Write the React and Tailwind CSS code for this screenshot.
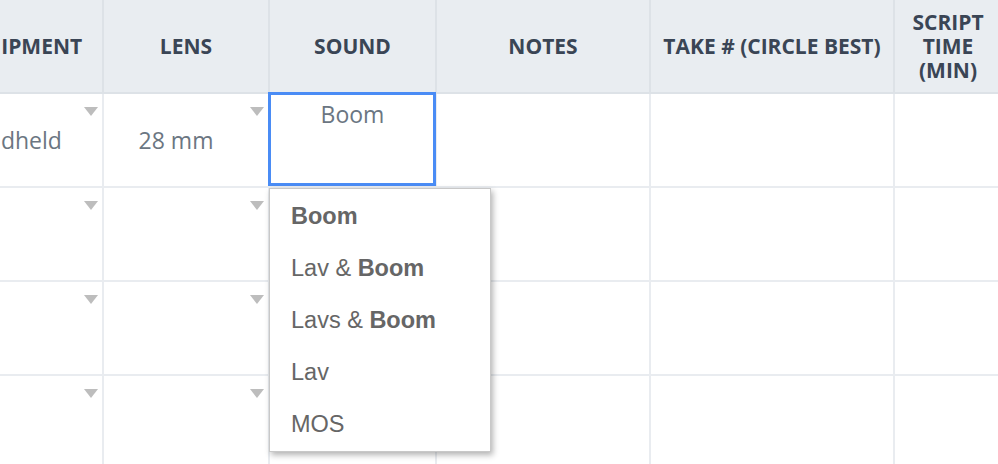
import React from 'react';

const columns = [
  { key: 'equipment', label: 'EQUIPMENT', width: 'w-[167px]', arrow: true },
  { key: 'lens', label: 'LENS', width: 'w-[166px]', arrow: true },
  { key: 'sound', label: 'SOUND', width: 'w-[167px]' },
  { key: 'notes', label: 'NOTES', width: 'w-[214px]' },
  { key: 'take', label: 'TAKE # (CIRCLE BEST)', width: 'w-[244px]' },
  { key: 'time', label: 'SCRIPT TIME (MIN)', width: 'w-[108px]' },
];

const rows = [
  { equipment: 'Handheld', lens: '28 mm', sound: 'Boom' },
  {},
  {},
  {},
];

const soundOptions = [
  [{ text: 'Boom', bold: true }],
  [{ text: 'Lav & ' }, { text: 'Boom', bold: true }],
  [{ text: 'Lavs & ' }, { text: 'Boom', bold: true }],
  [{ text: 'Lav' }],
  [{ text: 'MOS' }],
];

const Arrow = () => (
  <svg className="absolute top-[13px] right-[4px]" width="14" height="9" viewBox="0 0 14 9">
    <path d="M0 0h14L7 9z" fill="#bdbdbd" />
  </svg>
);

const SoundDropdown = () => (
  <div className="absolute left-[-1px] top-[94px] z-10 w-[222px] bg-white border border-[#c8c8c8] py-[1px] shadow-[2px_3px_6px_rgba(0,0,0,0.3)] font-['Liberation_Sans',Arial,sans-serif] text-[23.5px] text-[#666666]">
    {soundOptions.map((parts, i) => (
      <div key={i} className="h-[52px] leading-[52px] pl-[21px] whitespace-pre">
        {parts.map((p, j) => (
          <span key={j} className={p.bold ? 'font-bold' : ''}>{p.text}</span>
        ))}
      </div>
    ))}
  </div>
);

const App = () => {
  return (
    <div className="w-[998px] h-[464px] overflow-hidden bg-white font-['Open_Sans',sans-serif]">
      <div className="ml-[-63px] w-max">
        <div className="flex h-[94px] bg-[#e9edf1] border-b-2 border-[#dde2e7]">
          {columns.map((col) => (
            <div
              key={col.key}
              className={`${col.width} h-full flex items-center justify-center text-center px-2 border-r-2 border-[#dde2e7] font-bold text-[21px] leading-[24px] text-[#3a4555]`}
            >
              {col.label}
            </div>
          ))}
        </div>

        {rows.map((row, r) => (
          <div key={r} className="flex h-[94px] border-b-2 border-[#e9ecf0]">
            {columns.map((col) => {
              if (col.key === 'sound' && row.sound) {
                return (
                  <div key={col.key} className={`${col.width} relative h-full border-r-2 border-[#e9ecf0]`}>
                    <div className="absolute left-[-2px] top-[-2px] w-[168px] h-[94px] border-[3px] border-[#4a8cf5]" />
                    <div className="pt-[4px] text-center text-[23px] leading-[32px] text-[#6b7682]">{row.sound}</div>
                    <SoundDropdown />
                  </div>
                );
              }
              return (
                <div
                  key={col.key}
                  className={`${col.width} relative h-full flex items-center justify-center pr-[20px] border-r-2 border-[#e9ecf0] text-[23px] text-[#6b7682]`}
                >
                  {col.arrow && <Arrow />}
                  {row[col.key] || ''}
                </div>
              );
            })}
          </div>
        ))}
      </div>
    </div>
  );
};

export default App;
